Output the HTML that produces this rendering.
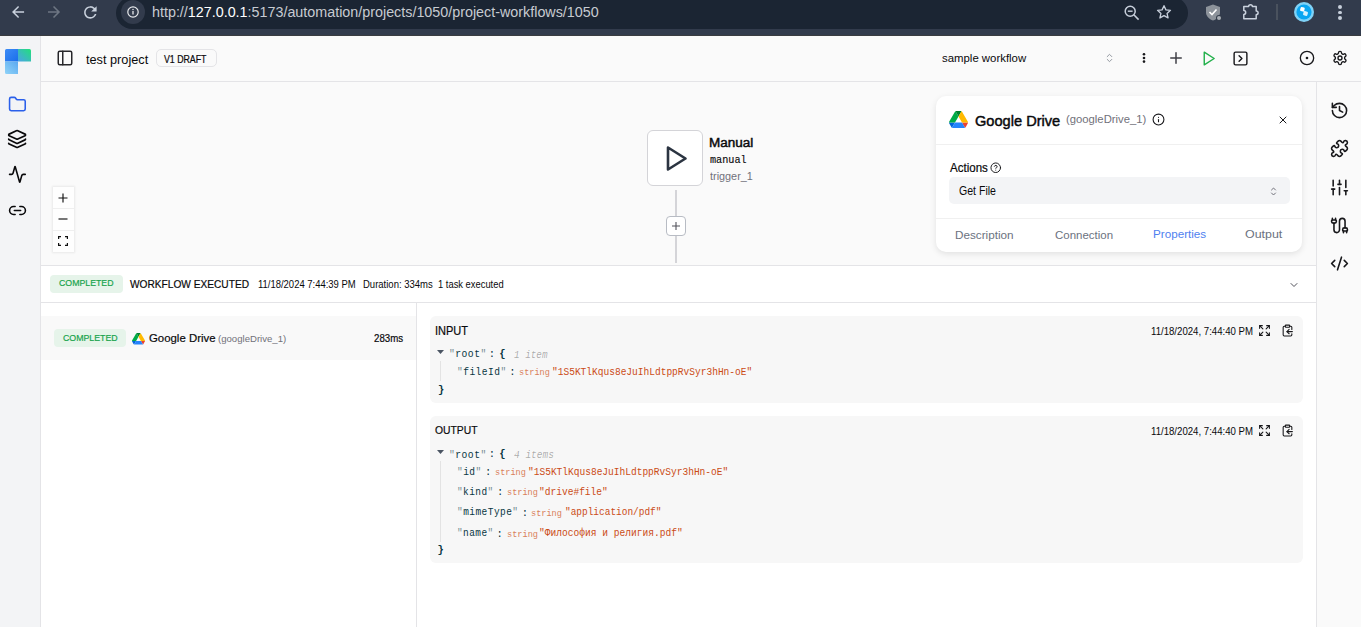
<!DOCTYPE html>
<html><head><meta charset="utf-8">
<style>
*{box-sizing:border-box;margin:0;padding:0}
html,body{width:1361px;height:627px;overflow:hidden;background:#fff;font-family:"Liberation Sans",sans-serif;color:#111827}
.a{position:absolute}
svg{display:block}
.ic{fill:none;stroke:currentColor;stroke-width:2;stroke-linecap:round;stroke-linejoin:round}
.t{white-space:nowrap;line-height:1}
.mono{font-family:"Liberation Mono",monospace}
</style></head><body>
<!-- browser chrome -->
<div class="a" style="left:0;top:0;width:1361px;height:36px;background:#323b4c"></div>
<div class="a" style="left:0;top:35px;width:1361px;height:1px;background:#3a3c40"></div>
<div class="a" style="left:116px;top:-3px;width:1072px;height:32px;border-radius:16px;background:#1b2533"></div>
<div class="a" style="left:121px;top:0px;width:24px;height:24px;border-radius:12px;background:#323b4c"></div>


<!-- chrome icons -->
<svg class="a" style="left:8.98px;top:2.78px" width="18.1" height="18.1" viewBox="0 0 24 24"><path d="M20 11H7.83l5.59-5.59L12 4l-8 8 8 8 1.41-1.41L7.83 13H20v-2z" fill="#c9d1dd"/></svg>
<svg class="a" style="left:44.9px;top:2.78px" width="18.1" height="18.1" viewBox="0 0 24 24"><path d="M12 4l-1.41 1.41L16.17 11H4v2h12.17l-5.58 5.59L12 20l8-8z" fill="#6e7683"/></svg>
<svg class="a" style="left:80.6px;top:2.7px" width="18.75" height="18.75" viewBox="0 0 24 24"><path d="M17.65 6.35A7.958 7.958 0 0 0 12 4c-4.42 0-7.99 3.58-7.99 8s3.57 8 7.99 8c3.73 0 6.84-2.550 7.73-6h-2.08A5.99 5.99 0 0 1 12 18c-3.31 0-6-2.69-6-6s2.69-6 6-6c1.66 0 3.14.69 4.22 1.78L13 11h7V4l-2.35 2.35z" fill="#c9d1dd"/></svg>
<svg class="a" style="left:127px;top:6px;color:#e8eaed" width="12" height="12" viewBox="0 0 12 12"><circle cx="6" cy="6" r="5.2" fill="none" stroke="currentColor" stroke-width="1.2"/><path d="M6 5v3.6" stroke="currentColor" stroke-width="1.3"/><circle cx="6" cy="3.4" r=".75" fill="currentColor"/></svg>
<svg class="a" style="left:1124px;top:5px;color:#c7cfdb" width="16" height="16" viewBox="0 0 16 16"><circle cx="6.2" cy="6.2" r="5" fill="none" stroke="currentColor" stroke-width="1.5"/><path d="M9.8 9.8 14.6 14.6" stroke="currentColor" stroke-width="1.6"/><path d="M3.8 6.2h4.8" stroke="currentColor" stroke-width="1.4"/></svg>
<svg class="a" style="left:1156px;top:4px;color:#c7cfdb" width="16" height="16" viewBox="0 0 24 24"><path d="M12 2.5l2.9 6.3 6.8.7-5.1 4.6 1.5 6.8L12 17.4l-6.1 3.5 1.5-6.8-5.1-4.6 6.8-.7z" fill="none" stroke="currentColor" stroke-width="2" stroke-linejoin="round"/></svg>
<svg class="a" style="left:1205px;top:4px" width="18" height="17" viewBox="0 0 18 17"><path d="M8 .5 15 3v5.2c0 4-3 6.8-7 8.3C4 15 1 12.2 1 8.2V3z" fill="#8d939b"/><path d="M4.5 8 7 10.5 11.5 5.5" fill="none" stroke="#fff" stroke-width="1.6"/><circle cx="14" cy="14" r="3" fill="#333c4a"/><circle cx="14" cy="14" r="2" fill="#a9aeb5"/></svg>
<svg class="a" style="left:1242px;top:2px" width="18" height="18" viewBox="0 0 18 18"><path d="M1.8 4.6H6.6A1.9 1.9 0 0 1 10.4 4.6H14.2V8.9A1.9 1.9 0 0 1 14.2 12.7V16.8H1.8V12.4A1.9 1.9 0 0 0 1.8 8.6z" fill="none" stroke="#c9d1dd" stroke-width="1.5" stroke-linejoin="round"/></svg>
<div class="a" style="left:1276px;top:4px;width:2px;height:16px;background:#4a525e"></div>
<svg class="a" style="left:1294px;top:2px" width="20" height="20" viewBox="0 0 20 20"><circle cx="10" cy="10" r="10" fill="#7fd2f7"/><circle cx="10" cy="10" r="7.6" fill="#0aa6f2"/><rect x="6.3" y="5.2" width="4.2" height="4.2" rx="1" fill="#fff" transform="rotate(15 8.4 7.3)"/><rect x="9.3" y="9.3" width="4.4" height="4.4" rx="1" fill="#d8f1fd" transform="rotate(15 11.5 11.5)"/></svg>
<div class="a" style="left:1338px;top:5px;width:3.5px;height:3.5px;border-radius:2px;background:#c7cfdb"></div>
<div class="a" style="left:1338px;top:10.5px;width:3.5px;height:3.5px;border-radius:2px;background:#c7cfdb"></div>
<div class="a" style="left:1338px;top:16px;width:3.5px;height:3.5px;border-radius:2px;background:#c7cfdb"></div>

<!-- app -->
<div class="a" style="left:0;top:36px;width:40px;height:591px;background:#f3f4f6"></div>
<div class="a" style="left:40px;top:36px;width:1px;height:591px;background:#e4e4e7"></div>
<div class="a" style="left:41px;top:36px;width:1320px;height:45px;background:#fafafa"></div>
<div class="a" style="left:41px;top:81px;width:1320px;height:1px;background:#e4e4e7"></div>
<div class="a" style="left:41px;top:82px;width:1275px;height:183px;background:#fafafa"></div>
<div class="a" style="left:1316px;top:82px;width:1px;height:545px;background:#e4e4e7"></div>
<div class="a" style="left:1317px;top:82px;width:44px;height:545px;background:#fafafa"></div>
<div class="a" style="left:41px;top:265px;width:1275px;height:1px;background:#e4e4e7"></div>
<div class="a" style="left:41px;top:266px;width:1275px;height:361px;background:#fff"></div>
<div class="a" style="left:41px;top:302px;width:1275px;height:1px;background:#e4e4e7"></div>
<div class="a" style="left:416px;top:303px;width:1px;height:324px;background:#e4e4e7"></div>
<div class="a" style="left:41px;top:316px;width:375px;height:44px;background:#f9f9f9"></div>


<!-- sidebar logo -->
<svg class="a" style="left:5px;top:49px" width="26" height="26" viewBox="0 0 26 26">
<defs>
<linearGradient id="g1" x1="0" y1="0" x2="1" y2="1"><stop offset="0" stop-color="#3d8cf6"/><stop offset="1" stop-color="#1a6eea"/></linearGradient>
<linearGradient id="g2" x1="0" y1="1" x2="1" y2="0"><stop offset="0" stop-color="#4aa3e8"/><stop offset="1" stop-color="#22e07a"/></linearGradient>
<linearGradient id="g3" x1="1" y1="0" x2="0" y2="1"><stop offset="0" stop-color="#5aa8f0"/><stop offset="1" stop-color="#8fd3f8"/></linearGradient>
</defs>
<path d="M1.5 0H13V12.5H0V1.5A1.5 1.5 0 0 1 1.5 0z" fill="url(#g1)"/>
<path d="M13 0H24.5A1.5 1.5 0 0 1 26 1.5V12.5H13z" fill="url(#g2)"/>
<path d="M0 12.5H13V25H1.5A1.5 1.5 0 0 1 0 23.5z" fill="url(#g3)"/>
</svg>
<!-- sidebar icons -->
<svg class="a ic" style="left:8.1px;top:94.9px;color:#2b60ea" width="18.8" height="18.8" viewBox="0 0 24 24" stroke-width="2.2"><path d="M20 20a2 2 0 0 0 2-2V8a2 2 0 0 0-2-2h-7.9a2 2 0 0 1-1.69-.9L9.6 3.9A2 2 0 0 0 7.93 3H4a2 2 0 0 0-2 2v13a2 2 0 0 0 2 2Z"/></svg>
<svg class="a ic" style="left:7.4px;top:129.4px;color:#09090b" width="20.2" height="20.2" viewBox="0 0 24 24" stroke-width="2.2"><path d="M12.83 2.18a2 2 0 0 0-1.66 0L2.6 6.08a1 1 0 0 0 0 1.83l8.58 3.91a2 2 0 0 0 1.66 0l8.58-3.9a1 1 0 0 0 0-1.83z"/><path d="M2 12a1 1 0 0 0 .58.91l8.6 3.91a2 2 0 0 0 1.65 0l8.58-3.9A1 1 0 0 0 22 12"/><path d="M2 17a1 1 0 0 0 .58.91l8.6 3.91a2 2 0 0 0 1.65 0l8.58-3.9A1 1 0 0 0 22 17"/></svg>
<svg class="a ic" style="left:8.1px;top:165px;color:#09090b" width="18.8" height="18.8" viewBox="0 0 24 24" stroke-width="2.2"><path d="M22 12h-2.48a2 2 0 0 0-1.93 1.46l-2.35 8.36a.25.25 0 0 1-.48 0L9.24 2.18a.25.25 0 0 0-.48 0l-2.35 8.36A2 2 0 0 1 4.49 12H2"/></svg>
<svg class="a ic" style="left:7.9px;top:200.9px;color:#09090b" width="19" height="19" viewBox="0 0 24 24" stroke-width="2.2"><path d="M9 17H7A5 5 0 0 1 7 7h2"/><path d="M15 7h2a5 5 0 1 1 0 10h-2"/><line x1="8" x2="16" y1="12" y2="12"/></svg>

<!-- header -->
<svg class="a ic" style="left:56px;top:49px;color:#27272a" width="18" height="18" viewBox="0 0 24 24"><rect width="18" height="18" x="3" y="3" rx="2"/><path d="M9 3v18"/></svg>
<div class="a" style="left:156px;top:49px;width:61px;height:18px;border:1px solid #e4e4e7;border-radius:5px;background:#fafafa"></div>

<svg class="a ic" style="left:1104px;top:52px;color:#8a8f98" width="11" height="12" viewBox="0 0 24 24" stroke-width="2.3"><path d="m7 15 5 5 5-5"/><path d="m7 9 5-5 5 5"/></svg>
<svg class="a" style="left:1140.4px;top:52.3px" width="8" height="12" viewBox="0 0 8 12"><circle cx="4" cy="2.3" r="1.3" fill="#18181b"/><circle cx="4" cy="5.95" r="1.3" fill="#18181b"/><circle cx="4" cy="9.6" r="1.3" fill="#18181b"/></svg>
<svg class="a ic" style="left:1167px;top:49px;color:#3f3f46" width="18" height="18" viewBox="0 0 24 24"><path d="M5 12h14"/><path d="M12 5v14"/></svg>
<svg class="a ic" style="left:1200px;top:50px;color:#22b04b" width="17" height="17" viewBox="0 0 24 24"><polygon points="6 3 20 12 6 21 6 3"/></svg>
<svg class="a ic" style="left:1232px;top:49.75px;color:#18181b" width="17" height="17" viewBox="0 0 24 24"><rect width="18" height="18" x="3" y="3" rx="2"/><path d="m10 8 4 4-4 4"/></svg>
<svg class="a ic" style="left:1299.3px;top:50px;color:#18181b" width="16" height="16" viewBox="0 0 24 24"><circle cx="12" cy="12" r="10"/><circle cx="12" cy="12" r="1"/></svg>
<svg class="a ic" style="left:1331.6px;top:50px;color:#18181b" width="16" height="16" viewBox="0 0 24 24"><path d="M12.22 2h-.44a2 2 0 0 0-2 2v.18a2 2 0 0 1-1 1.73l-.43.25a2 2 0 0 1-2 0l-.15-.08a2 2 0 0 0-2.73.73l-.22.38a2 2 0 0 0 .73 2.73l.15.1a2 2 0 0 1 1 1.72v.51a2 2 0 0 1-1 1.74l-.15.09a2 2 0 0 0-.73 2.73l.22.38a2 2 0 0 0 2.73.73l.15-.08a2 2 0 0 1 2 0l.43.25a2 2 0 0 1 1 1.73V20a2 2 0 0 0 2 2h.44a2 2 0 0 0 2-2v-.18a2 2 0 0 1 1-1.73l.43-.25a2 2 0 0 1 2 0l.15.08a2 2 0 0 0 2.73-.73l.22-.39a2 2 0 0 0-.73-2.73l-.15-.08a2 2 0 0 1-1-1.74v-.5a2 2 0 0 1 1-1.74l.15-.09a2 2 0 0 0 .73-2.73l-.22-.38a2 2 0 0 0-2.73-.73l-.15.08a2 2 0 0 1-2 0l-.43-.25a2 2 0 0 1-1-1.73V4a2 2 0 0 0-2-2z"/><circle cx="12" cy="12" r="3"/></svg>

<!-- right sidebar icons -->
<svg class="a ic" style="left:1330px;top:101px;color:#18181b" width="19" height="19" viewBox="0 0 24 24" stroke-width="2.15"><path d="M3 12a9 9 0 1 0 9-9 9.75 9.75 0 0 0-6.74 2.74L3 8"/><path d="M3 3v5h5"/><path d="M12 7v5l4 2"/></svg>
<svg class="a ic" style="left:1330px;top:138.6px;color:#18181b" width="19" height="19" viewBox="0 0 24 24" stroke-width="2.15"><path d="M15.39 4.39a1 1 0 0 0 1.68-.474 2.5 2.5 0 1 1 3.014 3.015 1 1 0 0 0-.474 1.68l1.683 1.682a2.414 2.414 0 0 1 0 3.414L19.61 15.39a1 1 0 0 1-1.68-.474 2.5 2.5 0 1 0-3.014 3.015 1 1 0 0 1 .474 1.68l-1.683 1.682a2.414 2.414 0 0 1-3.414 0L8.61 19.61a1 1 0 0 0-1.68.474 2.5 2.5 0 1 1-3.014-3.015 1 1 0 0 0 .474-1.68l-1.683-1.682a2.414 2.414 0 0 1 0-3.414L4.39 8.61a1 1 0 0 1 1.68.474 2.5 2.5 0 1 0 3.014-3.015 1 1 0 0 1-.474-1.68l1.683-1.682a2.414 2.414 0 0 1 3.414 0z"/></svg>
<svg class="a ic" style="left:1330px;top:178.2px;color:#18181b" width="19" height="19" viewBox="0 0 24 24" stroke-width="2.15"><line x1="4" x2="4" y1="21" y2="14"/><line x1="4" x2="4" y1="10" y2="3"/><line x1="12" x2="12" y1="21" y2="12"/><line x1="12" x2="12" y1="8" y2="3"/><line x1="20" x2="20" y1="21" y2="16"/><line x1="20" x2="20" y1="12" y2="3"/><line x1="2" x2="6" y1="14" y2="14"/><line x1="10" x2="14" y1="8" y2="8"/><line x1="18" x2="22" y1="16" y2="16"/></svg>
<svg class="a ic" style="left:1330px;top:215.8px;color:#18181b" width="19" height="19" viewBox="0 0 24 24" stroke-width="2.15"><path d="M17 21v-2a1 1 0 0 1-1-1v-1a2 2 0 0 1 2-2h2a2 2 0 0 1 2 2v1a1 1 0 0 1-1 1"/><path d="M19 15V6.5a1 1 0 0 0-7 0v11a1 1 0 0 1-7 0V9"/><path d="M21 21v-2h-4"/><path d="M3 5h4V3"/><path d="M7 5a1 1 0 0 1 1 1v1a2 2 0 0 1-2 2H4a2 2 0 0 1-2-2V6a1 1 0 0 1 1-1V3"/></svg>
<svg class="a ic" style="left:1330px;top:254.1px;color:#18181b" width="19" height="19" viewBox="0 0 24 24" stroke-width="2.15"><path d="m18 16 4-4-4-4"/><path d="m6 8-4 4 4 4"/><path d="m14.5 4-5 16"/></svg>


<!-- canvas -->
<div class="a" style="left:647px;top:130px;width:56px;height:56px;border:1px solid #d4d4d8;border-radius:6px;background:#fff"></div>
<svg class="a" style="left:664px;top:145px;color:#2b3441" width="26" height="27" viewBox="0 0 26 27"><path d="M4 2.5 L21.5 13.5 L4 24.5Z" fill="none" stroke="currentColor" stroke-width="2.6" stroke-linejoin="round"/></svg>
<div class="a" style="left:675px;top:190px;width:1.5px;height:26px;background:#d4d4d8"></div>
<div class="a" style="left:666px;top:216px;width:20px;height:20px;border:1px solid #b8bcc4;border-radius:4px;background:#fff"></div>
<svg class="a" style="left:671px;top:221px;color:#52525b" width="10" height="10" viewBox="0 0 10 10"><path d="M5 1v8M1 5h8" stroke="currentColor" stroke-width="1.1"/></svg>
<div class="a" style="left:675px;top:236px;width:1.5px;height:27px;background:#d4d4d8"></div>

<!-- zoom controls -->
<div class="a" style="left:53px;top:187px;width:21px;height:65px;background:#fefefe;box-shadow:0 0 2px 1px rgba(0,0,0,.07)"></div>
<div class="a" style="left:53px;top:208px;width:21px;height:1px;background:#efefef"></div>
<div class="a" style="left:53px;top:230px;width:21px;height:1px;background:#efefef"></div>
<svg class="a" style="left:58px;top:193px" width="10" height="10" viewBox="0 0 10 10"><path d="M5 0.5v9M0.5 5h9" stroke="#111" stroke-width="1.15"/></svg>
<svg class="a" style="left:58px;top:214px" width="10" height="10" viewBox="0 0 10 10"><path d="M0.5 5h9" stroke="#111" stroke-width="1.15"/></svg>
<svg class="a" style="left:58px;top:236px" width="10" height="10" viewBox="0 0 10 10"><path d="M0.6 3V0.6H3M7 0.6H9.4V3M9.4 7V9.4H7M3 9.4H0.6V7" fill="none" stroke="#111" stroke-width="1.2"/></svg>

<!-- cards -->
<div class="a" style="left:430px;top:316px;width:873px;height:87px;border-radius:6px;background:#f7f7f7"></div>
<div class="a" style="left:430px;top:416px;width:873px;height:147px;border-radius:6px;background:#f7f7f7"></div>


<!-- bottom panel -->
<div class="a" style="left:50px;top:275px;width:73px;height:18px;border-radius:4px;background:#e6f4ea"></div>
<svg class="a ic" style="left:1288px;top:279px;color:#52525b" width="12" height="12" viewBox="0 0 24 24" stroke-width="1.8"><path d="m6 9 6 6 6-6"/></svg>

<div class="a" style="left:54px;top:329px;width:72px;height:18px;border-radius:4px;background:#e6f4ea"></div>
<svg class="a" style="left:132px;top:333px" width="13" height="11.61" viewBox="0 0 87.3 78"><path d="m6.6 66.85 3.85 6.65c.8 1.4 1.95 2.5 3.3 3.3l13.75-23.8h-27.5c0 1.55.4 3.1 1.2 4.5z" fill="#0066da"/><path d="m43.65 25-13.75-23.8c-1.35.8-2.5 1.9-3.3 3.3l-25.4 44a9.06 9.06 0 0 0 -1.2 4.5h27.5z" fill="#00ac47"/><path d="m73.55 76.8c1.35-.8 2.5-1.9 3.3-3.3l1.6-2.75 7.650-13.25c.8-1.4 1.2-2.95 1.2-4.5h-27.502l5.852 11.5z" fill="#ea4335"/><path d="m43.65 25 13.75-23.8c-1.35-.8-2.9-1.2-4.5-1.2h-18.5c-1.6 0-3.15.45-4.5 1.2z" fill="#00832d"/><path d="m59.8 53h-32.3l-13.75 23.8c1.35.8 2.9 1.2 4.5 1.2h50.8c1.6 0 3.15-.45 4.5-1.2z" fill="#2684fc"/><path d="m73.4 26.5-12.7-22c-.8-1.4-1.95-2.5-3.3-3.3l-13.75 23.8 16.150 28h27.45c0-1.55-.4-3.1-1.2-4.5z" fill="#ffba00"/></svg>

<svg class="a ic" style="left:1258px;top:324px;color:#18181b" width="13" height="13" viewBox="0 0 24 24" stroke-width="2.4"><path d="m15 15 6 6"/><path d="m15 9 6-6"/><path d="M21 16v5h-5"/><path d="M21 8V3h-5"/><path d="M3 16v5h5"/><path d="m3 21 6-6"/><path d="M3 8V3h5"/><path d="M9 9 3 3"/></svg>
<svg class="a ic" style="left:1281px;top:323.5px;color:#18181b" width="13" height="13" viewBox="0 0 24 24" stroke-width="2.2"><rect width="8" height="4" x="8" y="2" rx="1" ry="1"/><path d="M8 4H6a2 2 0 0 0-2 2v14a2 2 0 0 0 2 2h12a2 2 0 0 0 2-2v-2"/><path d="M16 4h2a2 2 0 0 1 2 2v4"/><path d="M21 14H11"/><path d="m15 10-4 4 4 4"/></svg>
<svg class="a ic" style="left:1258px;top:424px;color:#18181b" width="13" height="13" viewBox="0 0 24 24" stroke-width="2.4"><path d="m15 15 6 6"/><path d="m15 9 6-6"/><path d="M21 16v5h-5"/><path d="M21 8V3h-5"/><path d="M3 16v5h5"/><path d="m3 21 6-6"/><path d="M3 8V3h5"/><path d="M9 9 3 3"/></svg>
<svg class="a ic" style="left:1281px;top:423.5px;color:#18181b" width="13" height="13" viewBox="0 0 24 24" stroke-width="2.2"><rect width="8" height="4" x="8" y="2" rx="1" ry="1"/><path d="M8 4H6a2 2 0 0 0-2 2v14a2 2 0 0 0 2 2h12a2 2 0 0 0 2-2v-2"/><path d="M16 4h2a2 2 0 0 1 2 2v4"/><path d="M21 14H11"/><path d="m15 10-4 4 4 4"/></svg>


<!-- json tree decorations -->
<svg class="a" style="left:437px;top:349.5px" width="7" height="4" viewBox="0 0 7 4"><path d="M0 0H7L3.5 4z" fill="#4b5563"/></svg>
<svg class="a" style="left:437px;top:449.5px" width="7" height="4" viewBox="0 0 7 4"><path d="M0 0H7L3.5 4z" fill="#4b5563"/></svg>
<div class="a" style="left:440px;top:361px;width:1px;height:20px;background:#e3e3e3"></div>
<div class="a" style="left:440px;top:461px;width:1px;height:81px;background:#e3e3e3"></div>

<!-- node panel card -->
<div class="a" style="left:936px;top:96px;width:366px;height:156px;border-radius:10px;background:#fff;box-shadow:0 2px 6px rgba(0,0,0,.10)"></div>
<div class="a" style="left:936px;top:144px;width:366px;height:1px;background:#f0f0f0"></div>
<div class="a" style="left:936px;top:218px;width:366px;height:1px;background:#f0f0f0"></div>
<div class="a" style="left:949px;top:177px;width:341px;height:27px;border-radius:5px;background:#f3f4f6"></div>


<!-- panel content -->
<svg class="a" style="left:949px;top:111px" width="19" height="16.97" viewBox="0 0 87.3 78"><path d="m6.6 66.85 3.85 6.65c.8 1.4 1.95 2.5 3.3 3.3l13.75-23.8h-27.5c0 1.55.4 3.1 1.2 4.5z" fill="#0066da"/><path d="m43.65 25-13.75-23.8c-1.35.8-2.5 1.9-3.3 3.3l-25.4 44a9.06 9.06 0 0 0 -1.2 4.5h27.5z" fill="#00ac47"/><path d="m73.55 76.8c1.35-.8 2.5-1.9 3.3-3.3l1.6-2.75 7.65-13.25c.8-1.4 1.2-2.95 1.2-4.5h-27.502l5.852 11.5z" fill="#ea4335"/><path d="m43.65 25 13.75-23.8c-1.35-.8-2.9-1.2-4.5-1.2h-18.5c-1.6 0-3.15.45-4.5 1.2z" fill="#00832d"/><path d="m59.8 53h-32.3l-13.75 23.8c1.35.8 2.9 1.2 4.5 1.2h50.8c1.6 0 3.15-.45 4.5-1.2z" fill="#2684fc"/><path d="m73.4 26.5-12.7-22c-.8-1.4-1.95-2.5-3.3-3.3l-13.75 23.8 16.15 28h27.45c0-1.55-.4-3.1-1.2-4.5z" fill="#ffba00"/></svg>
<svg class="a ic" style="left:1152px;top:113px;color:#18181b" width="13" height="13" viewBox="0 0 24 24"><circle cx="12" cy="12" r="10"/><path d="M12 16v-4"/><path d="M12 8h.01"/></svg>
<svg class="a ic" style="left:1277px;top:113.5px;color:#18181b" width="12" height="12" viewBox="0 0 24 24" stroke-width="2.2"><path d="M18 6 6 18"/><path d="m6 6 12 12"/></svg>
<svg class="a ic" style="left:990px;top:161.5px;color:#18181b" width="11.5" height="11.5" viewBox="0 0 24 24" stroke-width="1.8"><circle cx="12" cy="12" r="10"/><path d="M9.09 9a3 3 0 0 1 5.83 1c0 2-3 3-3 3"/><path d="M12 17h.01"/></svg>
<svg class="a ic" style="left:1268.5px;top:186px;color:#71717a" width="9" height="11" viewBox="0 0 18 22" stroke-width="1.8"><path d="m5 14 4 4 4-4"/><path d="m5 8 4-4 4 4"/></svg>

<div class="a t" id="url" style="left:152.40px;top:6.44px;font-size:13.80px;transform:scaleX(1.0382);transform-origin:0 0;color:#c7cbd1">http://<span style="color:#fff">127.0.0.1</span>:5173/automation/projects/1050/project-workflows/1050</div>
<div class="a t" id="proj" style="left:86.00px;top:52.96px;font-size:13.70px;transform:scaleX(0.9287);transform-origin:0 0;color:#09090b">test project</div>
<div class="a t" id="v1" style="left:164.40px;top:54.50px;font-size:10.20px;transform:scaleX(0.8620);transform-origin:0 0;color:#09090b;-webkit-text-stroke:0.2px currentColor">V1 DRAFT</div>
<div class="a t" id="wf" style="left:942.00px;top:52.80px;font-size:11.25px;transform:scaleX(1.0122);transform-origin:0 0;color:#09090b">sample workflow</div>
<div class="a t" id="man" style="left:708.80px;top:136.86px;font-size:12.50px;transform:scaleX(1.0794);transform-origin:0 0;color:#09090b;-webkit-text-stroke:0.45px currentColor">Manual</div>
<div class="a t mono" id="mman" style="left:709.80px;top:155.52px;font-size:10.00px;transform:scaleX(1.0171);transform-origin:0 0;color:#09090b;-webkit-text-stroke:0.12px currentColor">manual</div>
<div class="a t" id="trig" style="left:709.80px;top:170.52px;font-size:11.00px;transform:scaleX(0.9870);transform-origin:0 0;color:#71717a">trigger_1</div>
<div class="a t" id="comp1" style="left:59.20px;top:278.38px;font-size:9.70px;transform:scaleX(0.9037);transform-origin:0 0;color:#16a34a;-webkit-text-stroke:0.2px currentColor">COMPLETED</div>
<div class="a t" id="wfe" style="left:129.80px;top:278.98px;font-size:11.30px;transform:scaleX(0.8986);transform-origin:0 0;color:#09090b;-webkit-text-stroke:0.2px currentColor">WORKFLOW EXECUTED</div>
<div class="a t" id="date1" style="left:258.40px;top:279.96px;font-size:10.40px;transform:scaleX(0.9107);transform-origin:0 0;color:#09090b">11/18/2024 7:44:39 PM</div>
<div class="a t" id="dur" style="left:362.60px;top:280.12px;font-size:10.40px;transform:scaleX(0.9150);transform-origin:0 0;color:#09090b">Duration: 334ms</div>
<div class="a t" id="task" style="left:438.40px;top:280.12px;font-size:10.40px;transform:scaleX(0.9018);transform-origin:0 0;color:#09090b">1 task executed</div>
<div class="a t" id="comp2" style="left:62.60px;top:332.54px;font-size:9.70px;transform:scaleX(0.9072);transform-origin:0 0;color:#16a34a;-webkit-text-stroke:0.2px currentColor">COMPLETED</div>
<div class="a t" id="gdr" style="left:149.00px;top:333.12px;font-size:11.40px;transform:scaleX(1.0002);transform-origin:0 0;color:#09090b;-webkit-text-stroke:0.2px currentColor">Google Drive</div>
<div class="a t" id="gdr1" style="left:218.00px;top:334.28px;font-size:9.50px;transform:scaleX(1.0093);transform-origin:0 0;color:#71717a">(googleDrive_1)</div>
<div class="a t" id="ms" style="left:373.60px;top:333.48px;font-size:10.60px;transform:scaleX(0.9145);transform-origin:0 0;color:#09090b;-webkit-text-stroke:0.2px currentColor">283ms</div>
<div class="a t" id="inp" style="left:435.00px;top:326.44px;font-size:11.90px;transform:scaleX(0.9266);transform-origin:0 0;color:#09090b;-webkit-text-stroke:0.2px currentColor">INPUT</div>
<div class="a t" id="ts1" style="left:1151.00px;top:327.10px;font-size:10.30px;transform:scaleX(0.9346);transform-origin:0 0;color:#09090b">11/18/2024, 7:44:40 PM</div>
<div class="a t" id="outp" style="left:435.00px;top:423.56px;font-size:11.70px;transform:scaleX(0.8862);transform-origin:0 0;color:#09090b;-webkit-text-stroke:0.2px currentColor">OUTPUT</div>
<div class="a t" id="ts2" style="left:1151.00px;top:427.10px;font-size:10.30px;transform:scaleX(0.9346);transform-origin:0 0;color:#09090b">11/18/2024, 7:44:40 PM</div>
<div class="a t" id="pgd" style="left:974.60px;top:114.00px;font-size:14.50px;transform:scaleX(1.0071);transform-origin:0 0;color:#09090b;-webkit-text-stroke:0.45px currentColor">Google Drive</div>
<div class="a t" id="pgd1" style="left:1066.00px;top:114.18px;font-size:10.50px;transform:scaleX(1.0743);transform-origin:0 0;color:#71717a">(googleDrive_1)</div>
<div class="a t" id="act" style="left:949.60px;top:161.96px;font-size:12.20px;transform:scaleX(0.9463);transform-origin:0 0;color:#09090b;-webkit-text-stroke:0.2px currentColor">Actions</div>
<div class="a t" id="getf" style="left:958.60px;top:185.36px;font-size:12.00px;transform:scaleX(0.8794);transform-origin:0 0;color:#09090b">Get File</div>
<div class="a t" id="desc" style="left:955.40px;top:229.82px;font-size:11.80px;transform:scaleX(0.9933);transform-origin:0 0;color:#6b7280">Description</div>
<div class="a t" id="conn" style="left:1054.60px;top:229.82px;font-size:11.80px;transform:scaleX(0.9726);transform-origin:0 0;color:#6b7280">Connection</div>
<div class="a t" id="prop" style="left:1153.00px;top:229.34px;font-size:11.80px;transform:scaleX(0.9891);transform-origin:0 0;color:#4f7ff0">Properties</div>
<div class="a t" id="outt" style="left:1245.20px;top:229.34px;font-size:11.80px;transform:scaleX(1.0531);transform-origin:0 0;color:#6b7280">Output</div>
<div class="a t mono" id="k_root1" style="left:448.80px;top:349.16px;font-size:10.50px;transform:scaleX(0.9242);transform-origin:0 0;color:#073642;letter-spacing:0.5px"><span style="opacity:.55">"</span>root<span style="opacity:.55">"</span></div>
<div class="a t mono" id="c_root1" style="left:488.80px;top:349.10px;font-size:10.50px;color:#073642">:</div>
<div class="a t mono" id="b_open1" style="left:499.20px;top:349.28px;font-size:10.50px;color:#073642;font-weight:bold">{</div>
<div class="a t mono" id="n_items1" style="left:514.40px;top:349.50px;font-size:10.50px;transform:scaleX(0.8872);transform-origin:0 0;color:rgba(0,0,0,.33);font-style:italic">1 item</div>
<div class="a t mono" id="k_fileId" style="left:457.20px;top:366.60px;font-size:10.50px;transform:scaleX(0.9117);transform-origin:0 0;color:#073642;letter-spacing:0.5px"><span style="opacity:.55">"</span>fileId<span style="opacity:.55">"</span></div>
<div class="a t mono" id="c_fileId" style="left:509.20px;top:366.66px;font-size:10.50px;color:#073642">:</div>
<div class="a t mono" id="l_str1" style="left:519.20px;top:369.20px;font-size:8.50px;transform:scaleX(1.0052);transform-origin:0 0;color:#d9805a">string</div>
<div class="a t mono" id="v_1" style="left:551.60px;top:366.94px;font-size:10.50px;transform:scaleX(0.9078);transform-origin:0 0;color:#cb4b16">"1S5KTlKqus8eJuIhLdtppRvSyr3hHn-oE"</div>
<div class="a t mono" id="b_close1" style="left:438.00px;top:384.60px;font-size:10.50px;color:#073642;font-weight:bold">}</div>
<div class="a t mono" id="k_root2" style="left:448.80px;top:449.50px;font-size:10.50px;transform:scaleX(0.9242);transform-origin:0 0;color:#073642;letter-spacing:0.5px"><span style="opacity:.55">"</span>root<span style="opacity:.55">"</span></div>
<div class="a t mono" id="c_root2" style="left:488.80px;top:449.10px;font-size:10.50px;color:#073642">:</div>
<div class="a t mono" id="b_open2" style="left:499.20px;top:449.28px;font-size:10.50px;color:#073642;font-weight:bold">{</div>
<div class="a t mono" id="n_items2" style="left:514.20px;top:449.50px;font-size:10.50px;transform:scaleX(0.9055);transform-origin:0 0;color:rgba(0,0,0,.33);font-style:italic">4 items</div>
<div class="a t mono" id="k_id" style="left:457.20px;top:466.94px;font-size:10.50px;transform:scaleX(0.9087);transform-origin:0 0;color:#073642;letter-spacing:0.5px"><span style="opacity:.55">"</span>id<span style="opacity:.55">"</span></div>
<div class="a t mono" id="c_id" style="left:485.00px;top:467.12px;font-size:10.50px;color:#073642">:</div>
<div class="a t mono" id="l_str_id" style="left:494.80px;top:469.20px;font-size:8.50px;transform:scaleX(1.0052);transform-origin:0 0;color:#d9805a">string</div>
<div class="a t mono" id="v_id" style="left:527.80px;top:466.94px;font-size:10.50px;transform:scaleX(0.9078);transform-origin:0 0;color:#cb4b16">"1S5KTlKqus8eJuIhLdtppRvSyr3hHn-oE"</div>
<div class="a t mono" id="k_kind" style="left:457.20px;top:486.60px;font-size:10.50px;transform:scaleX(0.8982);transform-origin:0 0;color:#073642;letter-spacing:0.5px"><span style="opacity:.55">"</span>kind<span style="opacity:.55">"</span></div>
<div class="a t mono" id="c_kind" style="left:497.00px;top:486.66px;font-size:10.50px;color:#073642">:</div>
<div class="a t mono" id="l_str_kind" style="left:507.40px;top:489.20px;font-size:8.50px;transform:scaleX(1.0052);transform-origin:0 0;color:#d9805a">string</div>
<div class="a t mono" id="v_kind" style="left:539.00px;top:487.06px;font-size:10.50px;transform:scaleX(0.9098);transform-origin:0 0;color:#cb4b16">"drive#file"</div>
<div class="a t mono" id="k_mime" style="left:457.40px;top:506.60px;font-size:10.50px;transform:scaleX(0.9041);transform-origin:0 0;color:#073642;letter-spacing:0.5px"><span style="opacity:.55">"</span>mimeType<span style="opacity:.55">"</span></div>
<div class="a t mono" id="c_mime" style="left:521.80px;top:508.34px;font-size:10.50px;color:#073642">:</div>
<div class="a t mono" id="l_str_mime" style="left:531.40px;top:509.76px;font-size:8.50px;transform:scaleX(1.0064);transform-origin:0 0;color:#d9805a">string</div>
<div class="a t mono" id="v_mime" style="left:564.60px;top:506.60px;font-size:10.50px;transform:scaleX(0.9002);transform-origin:0 0;color:#cb4b16">"application/pdf"</div>
<div class="a t mono" id="k_name" style="left:457.40px;top:527.60px;font-size:10.50px;transform:scaleX(0.8981);transform-origin:0 0;color:#073642;letter-spacing:0.5px"><span style="opacity:.55">"</span>name<span style="opacity:.55">"</span></div>
<div class="a t mono" id="c_name" style="left:496.40px;top:528.66px;font-size:10.50px;color:#073642">:</div>
<div class="a t mono" id="l_str_name" style="left:506.60px;top:530.54px;font-size:8.50px;transform:scaleX(1.0109);transform-origin:0 0;color:#d9805a">string</div>
<div class="a t mono" id="v_name" style="left:539.20px;top:527.62px;font-size:10.50px;transform:scaleX(0.9123);transform-origin:0 0;color:#cb4b16">"Философия и религия.pdf"</div>
<div class="a t mono" id="b_close2" style="left:437.60px;top:545.38px;font-size:10.50px;color:#073642;font-weight:bold">}</div>
</body></html>
